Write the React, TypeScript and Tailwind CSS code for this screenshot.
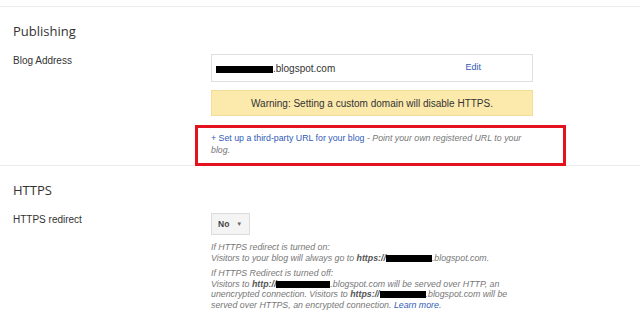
import { ReactNode } from "react";

const Redacted = ({ w }: { w: number }) => (
	<span className="inline-block h-[7px] bg-black align-[-1px]" style={{ width: w }} />
);

const Section = ({ title, children }: { title: string; children: ReactNode }) => (
	<div className="border-t border-[#ebebeb] pl-[13px] pt-[14px]">
		<h2 className="text-[13px] leading-[20px] text-[#333] font-['Open_Sans',sans-serif] font-normal">
			{title}
		</h2>
		<div className="mt-[13px]">{children}</div>
	</div>
);

const Row = ({ label, children }: { label: string; children: ReactNode }) => (
	<div className="flex items-start">
		<div className="w-[198px] pt-[1px] text-[10px] leading-[12px] text-[#333]">{label}</div>
		<div className="w-[322px]">{children}</div>
	</div>
);

const App = () => {
	return (
		<div className="w-[640px] h-[327px] overflow-hidden bg-white pt-[6px] font-['Liberation_Sans',Arial,sans-serif]">
			<Section title="Publishing">
				<Row label="Blog Address">
					{/* blog address box */}
					<div className="flex h-[28px] items-center justify-between border border-[#e0e0e0] pl-[4px] pr-[51px] text-[10px] text-[#333]">
						<span>
							<Redacted w={57} />
							.blogspot.com
						</span>
						<span className="text-[9px] text-[#2f5bb7]">Edit</span>
					</div>
					<div className="mt-[8px] flex h-[26px] items-center justify-center border border-[#f3dd9a] bg-[#fce9ac] text-[10px] text-[#333]">
						Warning: Setting a custom domain will disable HTTPS.
					</div>
					{/* red annotation */}
					<div className="-ml-[16px] mt-[9px] h-[41px] w-[371px] border-[3px] border-[#e3121e] pl-[13px] pr-[30px] pt-[4px] text-[8.8px] leading-[12px]">
						<span className="text-[#2f5bb7]">+ Set up a third-party URL for your blog</span>
						<span className="text-[#777]"> - </span>
						<span className="italic text-[#777]">Point your own registered URL to your blog.</span>
					</div>
				</Row>
			</Section>
			<div className="-mt-[1px]">
				<Section title="HTTPS">
					<Row label="HTTPS redirect">
						<div className="flex h-[22px] w-[39px] items-center gap-[7px] border border-[#dcdcdc] bg-[#f4f4f4] pl-[6px] text-[8.5px] font-bold text-[#444]">
							No
							<span className="text-[6px] text-[#666]">▼</span>
						</div>
						<div className="mt-[7px] text-[8.8px] italic leading-[10.5px] text-[#777]">
							<p>If HTTPS redirect is turned on:</p>
							<p>
								Visitors to your blog will always go to{" "}
								<b className="text-[#555]">https://</b>
								<Redacted w={46} />
								.blogspot.com.
							</p>
							<p className="mt-[5px]">If HTTPS Redirect is turned off:</p>
							<p>
								Visitors to <b className="text-[#555]">http://</b>
								<Redacted w={54} />
								.blogspot.com will be served over HTTP, an unencrypted connection. Visitors to{" "}
								<b className="text-[#555]">https://</b>
								<Redacted w={46} />
								.blogspot.com will be served over HTTPS, an encrypted connection.{" "}
								<span className="text-[#2f5bb7]">Learn more.</span>
							</p>
						</div>
					</Row>
				</Section>
			</div>
		</div>
	);
};

export default App;
